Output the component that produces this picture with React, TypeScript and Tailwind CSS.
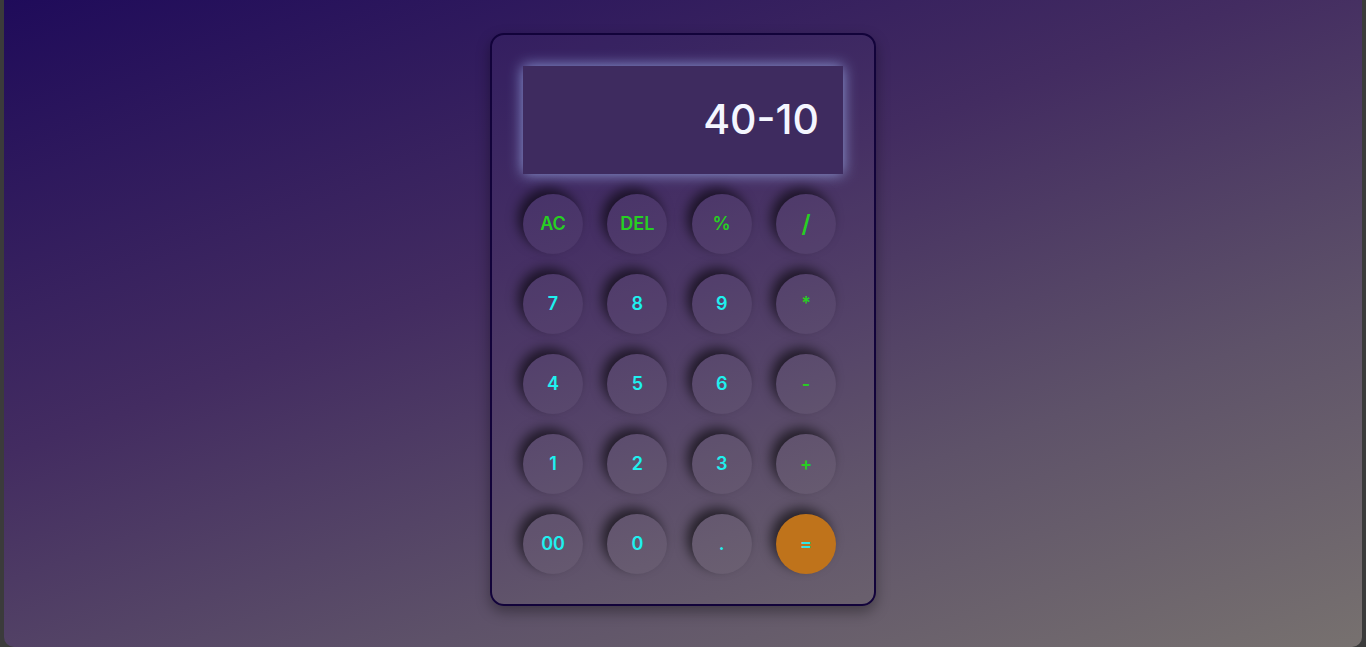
const keys: { label: string; tone: "green" | "cyan" | "equal"; big?: boolean }[] = [
  { label: "AC", tone: "green" },
  { label: "DEL", tone: "green" },
  { label: "%", tone: "green" },
  { label: "/", tone: "green", big: true },
  { label: "7", tone: "cyan" },
  { label: "8", tone: "cyan" },
  { label: "9", tone: "cyan" },
  { label: "*", tone: "green" },
  { label: "4", tone: "cyan" },
  { label: "5", tone: "cyan" },
  { label: "6", tone: "cyan" },
  { label: "-", tone: "green" },
  { label: "1", tone: "cyan" },
  { label: "2", tone: "cyan" },
  { label: "3", tone: "cyan" },
  { label: "+", tone: "green" },
  { label: "00", tone: "cyan" },
  { label: "0", tone: "cyan" },
  { label: ".", tone: "cyan" },
  { label: "=", tone: "equal" },
]

export default function App() {
  return (
    <div className="w-full h-[647px] bg-[#3b3b3b] px-[4px] overflow-hidden" style={{ fontFamily: "Inter, 'Open Sans', sans-serif" }}>
      <div className="w-full h-full rounded-b-[10px] bg-[linear-gradient(160deg,#1f0b5a_0%,#432c61_40%,#5e5269_70%,#77716f_100%)] flex justify-center pt-[33px]">
        <div className="w-[386px] h-[573px] rounded-[14px] border-2 border-[#12033a] pt-[31px] pl-[31px] shadow-[0_6px_14px_rgba(0,0,0,0.35)] bg-white/[0.02]">
          <div className="w-[320px] h-[108px] bg-[#3e2b5f] shadow-[0_0_14px_rgba(160,180,240,0.85)] flex items-center justify-end pr-[24px]">
            <span className="text-[41px] font-medium text-[#f4f6ff]">40-10</span>
          </div>
          <div className="mt-[20px] w-[313px] grid grid-cols-[repeat(4,60px)] justify-between gap-y-[20px]">
            {keys.map((k) => (
              <button
                key={k.label}
                className={
                  "w-[60px] h-[60px] rounded-full flex items-center justify-center font-semibold shadow-[-5px_-6px_12px_rgba(0,0,0,0.6)] " +
                  (k.tone === "equal" ? "bg-[#bf731b] text-[#2fe6e6] text-lg " : "bg-white/[0.04] text-lg ") +
                  (k.tone === "green" ? "text-[#27cf22] " : k.tone === "cyan" ? "text-[#1ef0ef] " : "") +
                  (k.big ? "text-[24px]" : "")
                }
              >
                {k.label}
              </button>
            ))}
          </div>
        </div>
      </div>
    </div>
  )
}
